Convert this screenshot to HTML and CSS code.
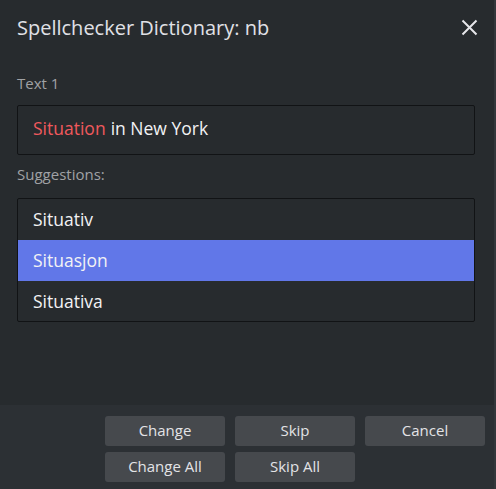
FILE: index.html
```html
<!doctype html>
<html lang="en">
	<head>
		<meta charset="utf-8">
		<title>Spellchecker Dictionary</title>
		<link rel="stylesheet" href="styles.css">
	</head>
	<body>
		<div class="dialog">
			<div class="head">
				<h1>Spellchecker Dictionary: nb</h1>
				<button class="close" title="Close">
					<svg width="17" height="17" viewBox="0 0 17 17">
						<path d="M1.5 1.5 L15.5 15.5 M15.5 1.5 L1.5 15.5" stroke="#e6e6ea" stroke-width="2" fill="none"/>
					</svg>
				</button>
			</div>
			<div class="body">
				<div class="label">Text 1</div>
				<div class="text-box"><span class="wrong">Situation</span> in New York</div>
				<div class="label">Suggestions:</div>
				<ul class="list">
					<li>Situativ</li>
					<li class="selected">Situasjon</li>
					<li>Situativa</li>
				</ul>
			</div>
			<div class="foot">
				<button>Change</button>
				<button>Skip</button>
				<button>Cancel</button>
				<button>Change All</button>
				<button>Skip All</button>
			</div>
		</div>
	</body>
</html>
```

FILE: styles.css
```css
html, body
{
	margin: 0px;
	padding: 0px;
	height: 100%;
}

body
{
	background-color: #272b2e;
	color: #e6e6ea;
	font-family: 'Open Sans', 'Noto Sans', sans-serif;
	font-size: 15px;
}

.dialog
{
	display: flex;
	flex-direction: column;
	height: 100%;
	border-right: 2px solid #33373b;
	box-sizing: border-box;
}

.head
{
	display: flex;
	align-items: center;
	justify-content: space-between;
	padding: 14px 16px 0px 17px;
	height: 27px;
}

.head h1
{
	margin: 0px;
	font-size: 20px;
	line-height: 27px;
	font-weight: normal;
	color: #e0e1e6;
}

.close
{
	background: none;
	border: none;
	padding: 0px;
	width: 17px;
	height: 17px;
	display: flex;
}

.body
{
	flex: 1;
	padding: 0px 19px 0px 17px;
}

.label
{
	color: #a0a2a5;
	font-size: 15px;
	line-height: 20px;
	margin-top: 32px;
}

.text-box
{
	margin-top: 12px;
	height: 43px;
	border: 1px solid #111315;
	border-radius: 2px;
	padding: 0px 15px 5px 15px;
	display: flex;
	align-items: center;
	font-size: 17.5px;
	color: #f2f2f4;
}

.text-box + .label
{
	margin-top: 9px;
}

.wrong
{
	color: #f0595d;
	margin-right: 5px;
}

.list
{
	list-style: none;
	margin: 14px 0px 0px 0px;
	padding: 0px;
	border: 1px solid #111315;
	border-radius: 2px;
}

.list li
{
	height: 41px;
	line-height: 40px;
	padding: 0px 15px;
	font-size: 17.5px;
	color: #f2f2f4;
}

.list li:last-child
{
	height: 40px;
}

.list li.selected
{
	background-color: #6177e8;
}

.foot
{
	background-color: #2c3034;
	height: 84px;
	box-sizing: border-box;
	padding: 11px 9px 0px 0px;
	display: grid;
	grid-template-columns: repeat(3, 120px);
	justify-content: end;
	column-gap: 10px;
	row-gap: 6px;
	align-content: start;
}

.foot button
{
	height: 30px;
	background-color: #46494d;
	border: none;
	border-radius: 3px;
	color: #e3e3e6;
	font-family: 'Open Sans', 'Noto Sans', sans-serif;
	font-size: 15px;
	line-height: 28px;
	padding: 0px 0px 2px 0px;
}
```
